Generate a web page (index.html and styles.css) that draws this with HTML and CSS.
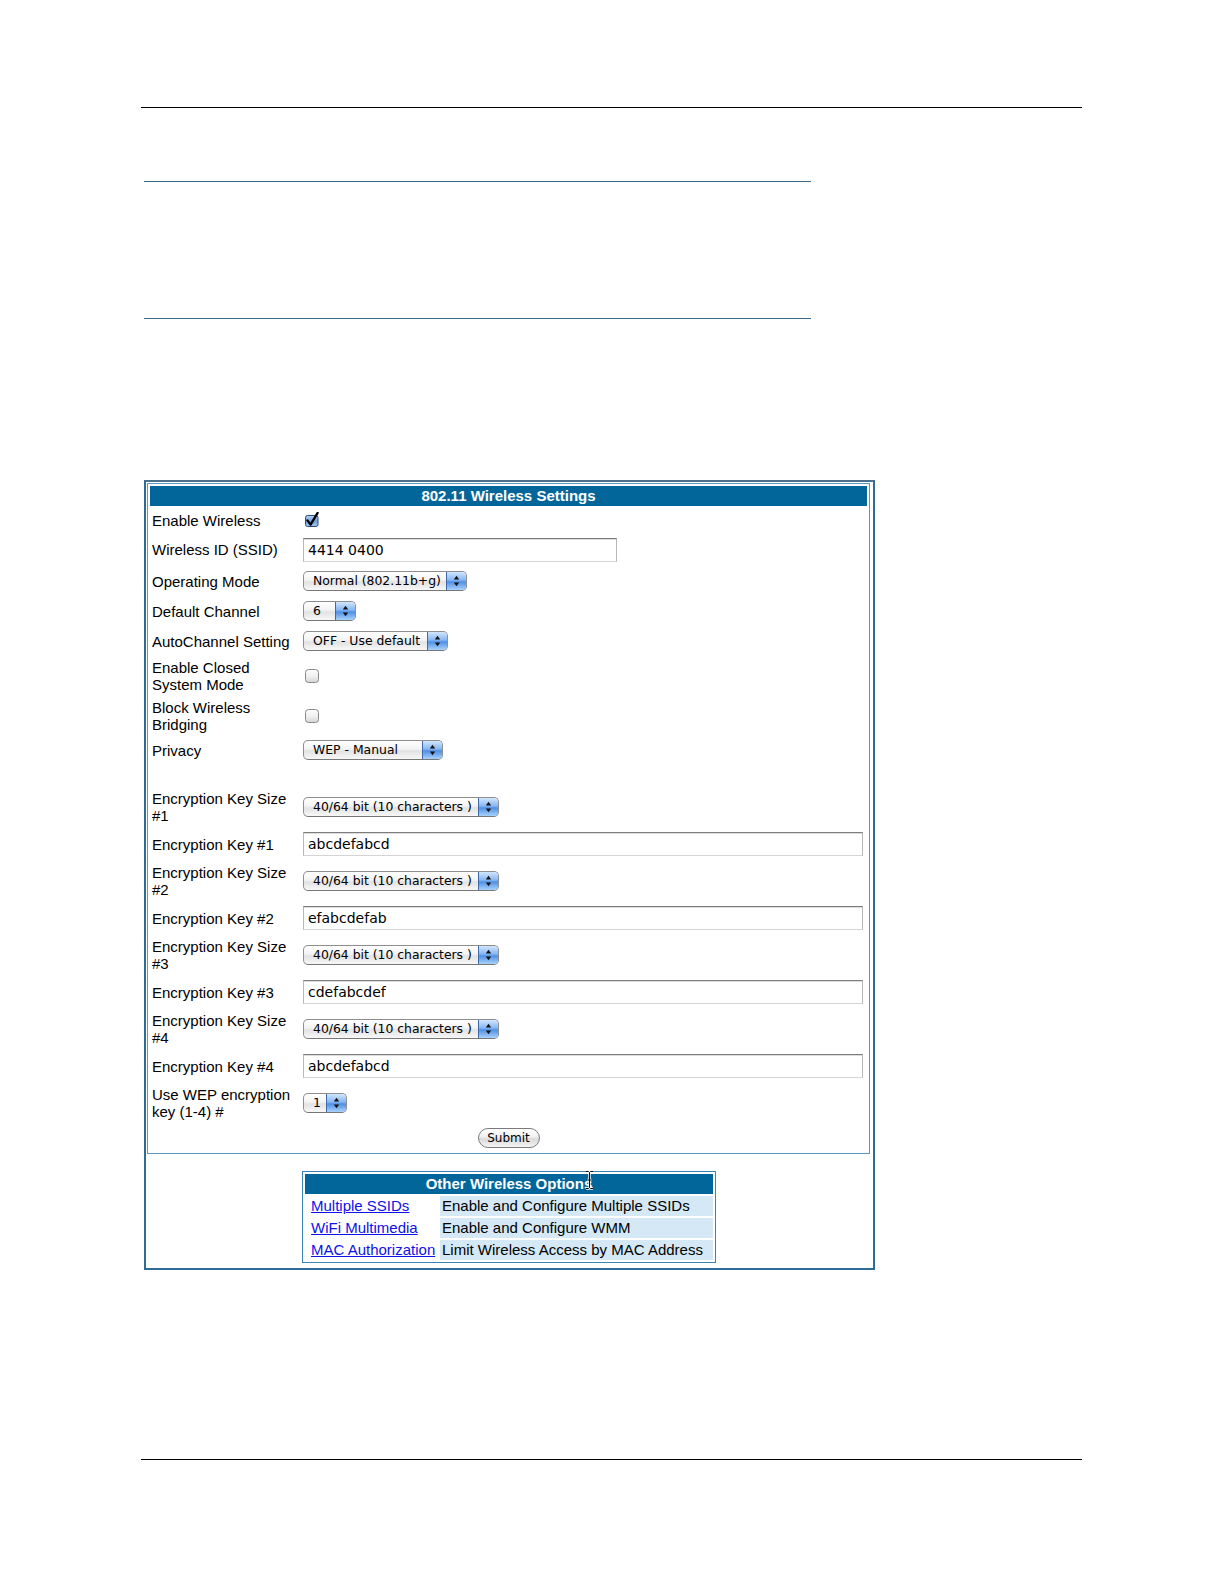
FILE: index.html
```html
<!DOCTYPE html>
<html>

<head>
  <meta charset="UTF-8">
  <title>802.11 Wireless Settings</title>
  <link rel="stylesheet" href="styles.css">
</head>

<body>
  <div class="page">
    <div class="rule-top"></div>
    <div class="figure-rule first"></div>
    <div class="figure-rule second"></div>

    <!-- Painel de configuracoes sem fio -->
    <div class="panel">
      <table class="settings">
        <tr>
          <th colspan="2" class="bar">802.11 Wireless Settings</th>
        </tr>
        <tr class="row-check">
          <td class="label">Enable Wireless</td>
          <td class="field">
            <svg class="checkbox" width="16" height="16" viewBox="0 0 16 16">
              <defs>
                <linearGradient id="checkOn" x1="0" y1="0" x2="0" y2="1">
                  <stop offset="0" stop-color="#b9d4f4"/>
                  <stop offset="0.5" stop-color="#6f9fde"/>
                  <stop offset="1" stop-color="#a6c8f2"/>
                </linearGradient>
              </defs>
              <rect x="1.5" y="3.5" width="12.5" height="11" rx="2" fill="url(#checkOn)" stroke="#2c4c78"/>
              <path d="M3.4 8.4 L6.6 12.6 L13.6 0.9" fill="none" stroke="#000" stroke-width="2.3" stroke-linecap="round" stroke-linejoin="round"/>
            </svg>
          </td>
        </tr>
        <tr class="row-ssid">
          <td class="label">Wireless ID (SSID)</td>
          <td class="field"><input class="text-input" type="text" value="4414 0400"></td>
        </tr>
        <tr class="row-select">
          <td class="label">Operating Mode</td>
          <td class="field">
            <span class="popup mode"><span class="popup-text">Normal (802.11b+g)</span><span class="popup-arrow"><svg width="7" height="14" viewBox="0 0 7 14"><polygon points="0.8,5.6 6.2,5.6 3.5,1.8"/><polygon points="0.8,8.4 6.2,8.4 3.5,12.2"/></svg></span></span>
          </td>
        </tr>
        <tr class="row-select">
          <td class="label">Default Channel</td>
          <td class="field">
            <span class="popup channel"><span class="popup-text">6</span><span class="popup-arrow"><svg width="7" height="14" viewBox="0 0 7 14"><polygon points="0.8,5.6 6.2,5.6 3.5,1.8"/><polygon points="0.8,8.4 6.2,8.4 3.5,12.2"/></svg></span></span>
          </td>
        </tr>
        <tr class="row-select">
          <td class="label">AutoChannel Setting</td>
          <td class="field">
            <span class="popup auto"><span class="popup-text">OFF - Use default</span><span class="popup-arrow"><svg width="7" height="14" viewBox="0 0 7 14"><polygon points="0.8,5.6 6.2,5.6 3.5,1.8"/><polygon points="0.8,8.4 6.2,8.4 3.5,12.2"/></svg></span></span>
          </td>
        </tr>
        <tr class="row-double">
          <td class="label">Enable Closed System Mode</td>
          <td class="field">
            <svg class="checkbox" width="16" height="16" viewBox="0 0 16 16">
              <defs>
                <linearGradient id="checkOff" x1="0" y1="0" x2="0" y2="1">
                  <stop offset="0" stop-color="#ffffff"/>
                  <stop offset="0.55" stop-color="#eeeeee"/>
                  <stop offset="1" stop-color="#d6d6d6"/>
                </linearGradient>
              </defs>
              <rect x="1.5" y="1.5" width="13" height="13" rx="3" fill="url(#checkOff)" stroke="#8a8a8a"/>
            </svg>
          </td>
        </tr>
        <tr class="row-double">
          <td class="label">Block Wireless Bridging</td>
          <td class="field">
            <svg class="checkbox" width="16" height="16" viewBox="0 0 16 16">
              <rect x="1.5" y="1.5" width="13" height="13" rx="3" fill="url(#checkOff)" stroke="#8a8a8a"/>
            </svg>
          </td>
        </tr>
        <tr class="row-privacy">
          <td class="label">Privacy</td>
          <td class="field">
            <span class="popup privacy"><span class="popup-text">WEP - Manual</span><span class="popup-arrow"><svg width="7" height="14" viewBox="0 0 7 14"><polygon points="0.8,5.6 6.2,5.6 3.5,1.8"/><polygon points="0.8,8.4 6.2,8.4 3.5,12.2"/></svg></span></span>
          </td>
        </tr>
        <tr class="row-spacer">
          <td class="label"></td>
          <td class="field"></td>
        </tr>
        <tr class="row-double">
          <td class="label">Encryption Key Size #1</td>
          <td class="field">
            <span class="popup keysize"><span class="popup-text">40/64 bit (10 characters )</span><span class="popup-arrow"><svg width="7" height="14" viewBox="0 0 7 14"><polygon points="0.8,5.6 6.2,5.6 3.5,1.8"/><polygon points="0.8,8.4 6.2,8.4 3.5,12.2"/></svg></span></span>
          </td>
        </tr>
        <tr class="row-key">
          <td class="label">Encryption Key #1</td>
          <td class="field"><input class="text-input wide" type="text" value="abcdefabcd"></td>
        </tr>
        <tr class="row-double">
          <td class="label">Encryption Key Size #2</td>
          <td class="field">
            <span class="popup keysize"><span class="popup-text">40/64 bit (10 characters )</span><span class="popup-arrow"><svg width="7" height="14" viewBox="0 0 7 14"><polygon points="0.8,5.6 6.2,5.6 3.5,1.8"/><polygon points="0.8,8.4 6.2,8.4 3.5,12.2"/></svg></span></span>
          </td>
        </tr>
        <tr class="row-key">
          <td class="label">Encryption Key #2</td>
          <td class="field"><input class="text-input wide" type="text" value="efabcdefab"></td>
        </tr>
        <tr class="row-double">
          <td class="label">Encryption Key Size #3</td>
          <td class="field">
            <span class="popup keysize"><span class="popup-text">40/64 bit (10 characters )</span><span class="popup-arrow"><svg width="7" height="14" viewBox="0 0 7 14"><polygon points="0.8,5.6 6.2,5.6 3.5,1.8"/><polygon points="0.8,8.4 6.2,8.4 3.5,12.2"/></svg></span></span>
          </td>
        </tr>
        <tr class="row-key">
          <td class="label">Encryption Key #3</td>
          <td class="field"><input class="text-input wide" type="text" value="cdefabcdef"></td>
        </tr>
        <tr class="row-double">
          <td class="label">Encryption Key Size #4</td>
          <td class="field">
            <span class="popup keysize"><span class="popup-text">40/64 bit (10 characters )</span><span class="popup-arrow"><svg width="7" height="14" viewBox="0 0 7 14"><polygon points="0.8,5.6 6.2,5.6 3.5,1.8"/><polygon points="0.8,8.4 6.2,8.4 3.5,12.2"/></svg></span></span>
          </td>
        </tr>
        <tr class="row-key">
          <td class="label">Encryption Key #4</td>
          <td class="field"><input class="text-input wide" type="text" value="abcdefabcd"></td>
        </tr>
        <tr class="row-double">
          <td class="label">Use WEP encryption key (1-4) #</td>
          <td class="field">
            <span class="popup keyindex"><span class="popup-text">1</span><span class="popup-arrow"><svg width="7" height="14" viewBox="0 0 7 14"><polygon points="0.8,5.6 6.2,5.6 3.5,1.8"/><polygon points="0.8,8.4 6.2,8.4 3.5,12.2"/></svg></span></span>
          </td>
        </tr>
        <tr class="row-submit">
          <td colspan="2" class="actions"><button class="submit">Submit</button></td>
        </tr>
      </table>

      <!-- Outras opcoes -->
      <div class="options-wrap">
        <table class="options">
          <tr>
            <th colspan="2" class="bar">Other Wireless Options</th>
          </tr>
          <tr>
            <td class="link"><a href="#">Multiple SSIDs</a></td>
            <td class="desc">Enable and Configure Multiple SSIDs</td>
          </tr>
          <tr>
            <td class="link"><a href="#">WiFi Multimedia</a></td>
            <td class="desc">Enable and Configure WMM</td>
          </tr>
          <tr>
            <td class="link"><a href="#">MAC Authorization</a></td>
            <td class="desc">Limit Wireless Access by MAC Address</td>
          </tr>
        </table>
        <svg class="ibeam" width="9" height="20" viewBox="0 0 9 20">
          <path d="M1 1.5 H3.5 L4.5 2.5 L5.5 1.5 H8 M4.5 2.5 V17.5 M2.5 10 H6.5 M1 18.5 H3.5 L4.5 17.5 L5.5 18.5 H8" fill="none" stroke="#fff" stroke-width="2.4"/>
          <path d="M1 1.5 H3.5 L4.5 2.5 L5.5 1.5 H8 M4.5 2.5 V17.5 M2.5 10 H6.5 M1 18.5 H3.5 L4.5 17.5 L5.5 18.5 H8" fill="none" stroke="#000" stroke-width="1"/>
        </svg>
      </div>
    </div>

    <div class="rule-bottom"></div>
  </div>
</body>

</html>
```

FILE: styles.css
```css
body {
  margin: 0;
  background-color: #fff;
  color: #000;
  font-family: 'Liberation Sans', Arial, Helvetica, sans-serif;
}

.page {
  width: 941px;
  margin-left: 141px;
}

.rule-top {
  margin-top: 107px;
  border-top: 1px solid #000;
}

.figure-rule {
  width: 667px;
  margin-left: 3px;
  border-top: 1px solid #3a6888;
}

.figure-rule.first {
  margin-top: 73px;
}

.figure-rule.second {
  margin-top: 136px;
}

.rule-bottom {
  margin-top: 189px;
  border-top: 1px solid #000;
}

/* Caixa externa */
.panel {
  box-sizing: border-box;
  width: 731px;
  margin-top: 161px;
  margin-left: 3px;
  border: 2px solid #2e6c96;
  border-top-color: #4c7088;
  padding: 1px 0 5px 1px;
}

.settings {
  width: 723px;
  border: 1px solid #5b98c0;
  border-collapse: separate;
  border-spacing: 2px;
}

.settings td {
  padding: 0;
  vertical-align: middle;
}

.bar {
  height: 20px;
  padding: 0;
  background-color: #03669a;
  color: #fff;
  font-size: 15px;
  font-weight: bold;
  line-height: 20px;
  text-align: center;
}

.settings td.label {
  width: 147px;
  padding: 0 2px;
  font-size: 15px;
  line-height: 17px;
}

.row-check td {
  height: 24px;
}

.row-ssid td {
  height: 31px;
}

.row-select td {
  height: 28px;
}

.row-double td {
  height: 38px;
}

.row-privacy td {
  height: 26px;
}

.row-spacer td {
  height: 21px;
}

.row-key td {
  height: 32px;
}

.row-submit td {
  height: 27px;
}

.checkbox {
  display: block;
  margin-left: 1px;
}

.text-input {
  display: block;
  box-sizing: border-box;
  width: 314px;
  height: 24px;
  margin: 0;
  padding: 0 4px;
  border: 1px solid #b8b8b8;
  border-top-color: #7d7d7d;
  border-bottom-color: #d4d4d4;
  box-shadow: inset 0 1px 0 #dcdcdc;
  background-color: #fff;
  color: #000;
  font-family: 'DejaVu Sans', Verdana, sans-serif;
  font-size: 14px;
  outline: none;
}

.text-input.wide {
  width: 560px;
}

/* Menus no estilo Aqua */
.popup {
  display: flex;
  box-sizing: border-box;
  height: 20px;
  border: 1px solid #8e8e8e;
  border-bottom-color: #777;
  border-radius: 5px;
  overflow: hidden;
  background: linear-gradient(#ffffff, #f3f3f3 45%, #e2e2e2 55%, #f7f7f7);
}

.popup.mode {
  width: 164px;
}

.popup.channel {
  width: 53px;
}

.popup.auto {
  width: 145px;
}

.popup.privacy {
  width: 140px;
}

.popup.keysize {
  width: 196px;
}

.popup.keyindex {
  width: 44px;
}

.popup-text {
  flex: 1;
  padding-left: 9px;
  font-family: 'DejaVu Sans', Verdana, sans-serif;
  font-size: 12.4px;
  line-height: 18px;
  white-space: nowrap;
  overflow: hidden;
}

.popup-arrow {
  display: flex;
  align-items: center;
  justify-content: center;
  width: 19px;
  border-left: 1px solid #3f69a8;
  background: linear-gradient(#d2e6fc, #86b6f2 45%, #4f8fe4 55%, #a8d2fb);
}

.popup-arrow polygon {
  fill: #111;
}

.actions {
  text-align: center;
}

.submit {
  width: 62px;
  height: 20px;
  padding: 0;
  border: 1px solid #7b7b7b;
  border-radius: 10px;
  background: linear-gradient(#ffffff, #f0f0f0 45%, #dadada 55%, #f4f4f4);
  color: #000;
  font-family: 'DejaVu Sans', Verdana, sans-serif;
  font-size: 12px;
  line-height: 18px;
  vertical-align: middle;
}

.options-wrap {
  position: relative;
  width: 414px;
  margin-top: 17px;
  margin-left: 155px;
}

.options {
  width: 414px;
  border: 1px solid #3a84b6;
  border-collapse: separate;
  border-spacing: 2px;
  font-size: 15px;
}

.options td {
  height: 20px;
  padding: 0 2px;
  line-height: 18px;
  white-space: nowrap;
}

.options td.link {
  width: 125px;
  padding-left: 6px;
}

.options td.desc {
  background-color: #d4e8f5;
}

.options a {
  color: #1010e8;
  text-decoration: underline;
}

.ibeam {
  position: absolute;
  left: 283px;
  top: -1px;
}
```
